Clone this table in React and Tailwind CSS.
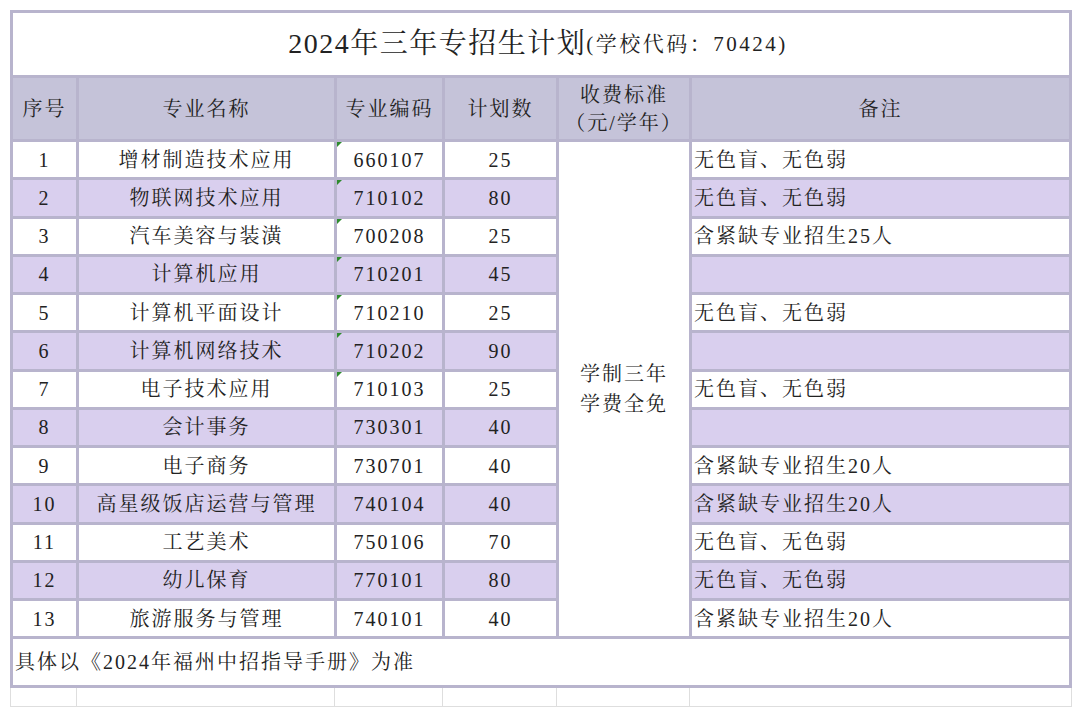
import React from "react";

const rows = [
  ["1", "增材制造技术应用", "660107", "25", "无色盲、无色弱"],
  ["2", "物联网技术应用", "710102", "80", "无色盲、无色弱"],
  ["3", "汽车美容与装潢", "700208", "25", "含紧缺专业招生25人"],
  ["4", "计算机应用", "710201", "45", ""],
  ["5", "计算机平面设计", "710210", "25", "无色盲、无色弱"],
  ["6", "计算机网络技术", "710202", "90", ""],
  ["7", "电子技术应用", "710103", "25", "无色盲、无色弱"],
  ["8", "会计事务", "730301", "40", ""],
  ["9", "电子商务", "730701", "40", "含紧缺专业招生20人"],
  ["10", "高星级饭店运营与管理", "740104", "40", "含紧缺专业招生20人"],
  ["11", "工艺美术", "750106", "70", "无色盲、无色弱"],
  ["12", "幼儿保育", "770101", "80", "无色盲、无色弱"],
  ["13", "旅游服务与管理", "740101", "40", "含紧缺专业招生20人"],
];

const font = {
  fontFamily:
    '"Liberation Serif", "Noto Serif CJK SC", "Noto Sans CJK SC", serif',
};

const Marker = () => (
  <span className="absolute left-0 top-0 w-0 h-0 border-t-[5px] border-t-[#2e8b2e] border-r-[5px] border-r-transparent" />
);

export default function App() {
  return (
    <div className="w-[1080px] h-[719px] bg-white pt-[10px] pl-[10px]" style={font}>
      <div className="w-[1062px] grid grid-cols-[63px_255px_105px_111px_130px_1fr] gap-[3px] p-[3px] bg-[#b8b4cd] text-[20px] tracking-[2px] text-[#222]">
        <div className="col-span-6 h-[62px] bg-white flex items-center justify-center pr-[6px]">
          <span className="text-[28px] tracking-[1.5px]">2024年三年专招生计划</span>
          <span className="text-[21px] tracking-[2.5px] mt-[2px]">(学校代码：70424)</span>
        </div>

        <div className="h-[61px] bg-[#c5c3d9] flex items-center justify-center">序号</div>
        <div className="bg-[#c5c3d9] flex items-center justify-center">专业名称</div>
        <div className="bg-[#c5c3d9] flex items-center justify-center">专业编码</div>
        <div className="bg-[#c5c3d9] flex items-center justify-center">计划数</div>
        <div className="bg-[#c5c3d9] flex flex-col items-center justify-center leading-[28px]">
          <span>收费标准</span>
          <span>（元/学年）</span>
        </div>
        <div className="bg-[#c5c3d9] flex items-center justify-center">备注</div>

        {rows.map((r, i) => {
          const bg = i % 2 === 1 ? "bg-[#d9cfee]" : "bg-white";
          return (
            <React.Fragment key={r[0]}>
              <div className={`h-[35.25px] ${bg} flex items-center justify-center`}>{r[0]}</div>
              <div className={`${bg} flex items-center justify-center`}>{r[1]}</div>
              <div className={`relative ${bg} flex items-center justify-center`}>
                {i < 7 && <Marker />}
                {r[2]}
              </div>
              <div className={`${bg} flex items-center justify-center`}>{r[3]}</div>
              {i === 0 && (
                <div className="row-span-13 bg-white flex flex-col items-center justify-center leading-[30px]">
                  <span>学制三年</span>
                  <span>学费全免</span>
                </div>
              )}
              <div className={`${bg} flex items-center pl-[2px]`}>{r[4]}</div>
            </React.Fragment>
          );
        })}

        <div className="col-span-6 h-[46px] bg-white flex items-center pl-[2px]">
          具体以《2024年福州中招指导手册》为准
        </div>
      </div>

      <div className="w-[1062px] h-[19px] grid grid-cols-[66px_258px_108px_114px_133px_1fr] border-l border-r border-b border-[#dedede]">
        <div className="border-r border-[#dedede]" />
        <div className="border-r border-[#dedede]" />
        <div className="border-r border-[#dedede]" />
        <div className="border-r border-[#dedede]" />
        <div className="border-r border-[#dedede]" />
        <div />
      </div>
    </div>
  );
}
